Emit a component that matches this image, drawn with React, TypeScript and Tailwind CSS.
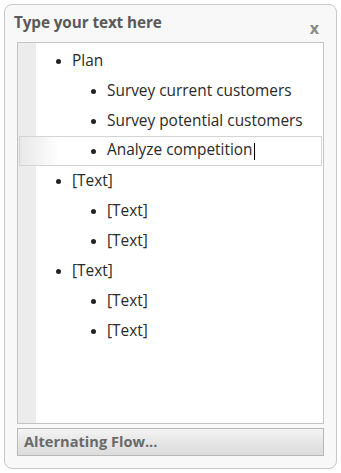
import React from "react";

const rows: { level: number; text: string; selected?: boolean }[] = [
  { level: 1, text: "Plan" },
  { level: 2, text: "Survey current customers" },
  { level: 2, text: "Survey potential customers" },
  { level: 2, text: "Analyze competition", selected: true },
  { level: 1, text: "[Text]" },
  { level: 2, text: "[Text]" },
  { level: 2, text: "[Text]" },
  { level: 1, text: "[Text]" },
  { level: 2, text: "[Text]" },
  { level: 2, text: "[Text]" },
];

export default function App() {
  return (
    <div className="w-[341px] h-[473px] bg-white p-[4px]" style={{ fontFamily: '"Open Sans", "Noto Sans", sans-serif' }}>
      <div className="w-[333px] h-[465px] bg-[#f8f8f8] border border-[#c8c8c8] rounded-[8px] flex flex-col px-[12px]">
        <div className="h-[37px] flex items-center justify-between pr-[5px]">
          <span className="text-[15.3px] font-bold text-[#5a5a5a] ml-[-3px] mt-[-2px] tracking-[-0.1px]">Type your text here</span>
          <span className="text-[16px] font-bold text-[#8a8a8a] mt-[9px]">x</span>
        </div>
        <div className="h-[382px] border border-[#c4c4c4] bg-white flex relative">
          <div className="w-[18px] bg-[#ececec]" />
          <div className="flex-1 pt-[3px]">
            {rows.map((r, i) => (
              <div
                key={i}
                className={
                  "h-[30px] flex items-center " +
                  (r.selected ? "border border-[#d4d4d4] ml-[-17px] mr-[1px] bg-white" : "")
                }
              >
                {r.selected && (
                  <div className="w-[40px] h-full bg-gradient-to-r from-[#e8e8e8] to-[#ffffff]" />
                )}
                <div
                  className={
                    "flex items-center " +
                    (r.level === 1 ? "pl-[20px]" : "pl-[55px]") +
                    (r.selected ? " ml-[-24px]" : "")
                  }
                >
                  <span className="w-[5px] h-[5px] rounded-full bg-[#222]" />
                  <span className="ml-[11px] text-[15.4px] text-[#2a2a2a] leading-none">
                    {r.text}
                    {r.selected && <span className="inline-block w-[1px] h-[17px] bg-black align-middle ml-[1px]" />}
                  </span>
                </div>
              </div>
            ))}
          </div>
        </div>
        <div className="mt-[4px] h-[28px] border border-[#b8b8b8] bg-gradient-to-b from-[#f4f4f4] via-[#e6e6e6] to-[#dcdcdc] flex items-center px-[6px]">
          <span className="text-[14.6px] font-bold text-[#6a6a6a]">Alternating Flow...</span>
        </div>
      </div>
    </div>
  );
}
